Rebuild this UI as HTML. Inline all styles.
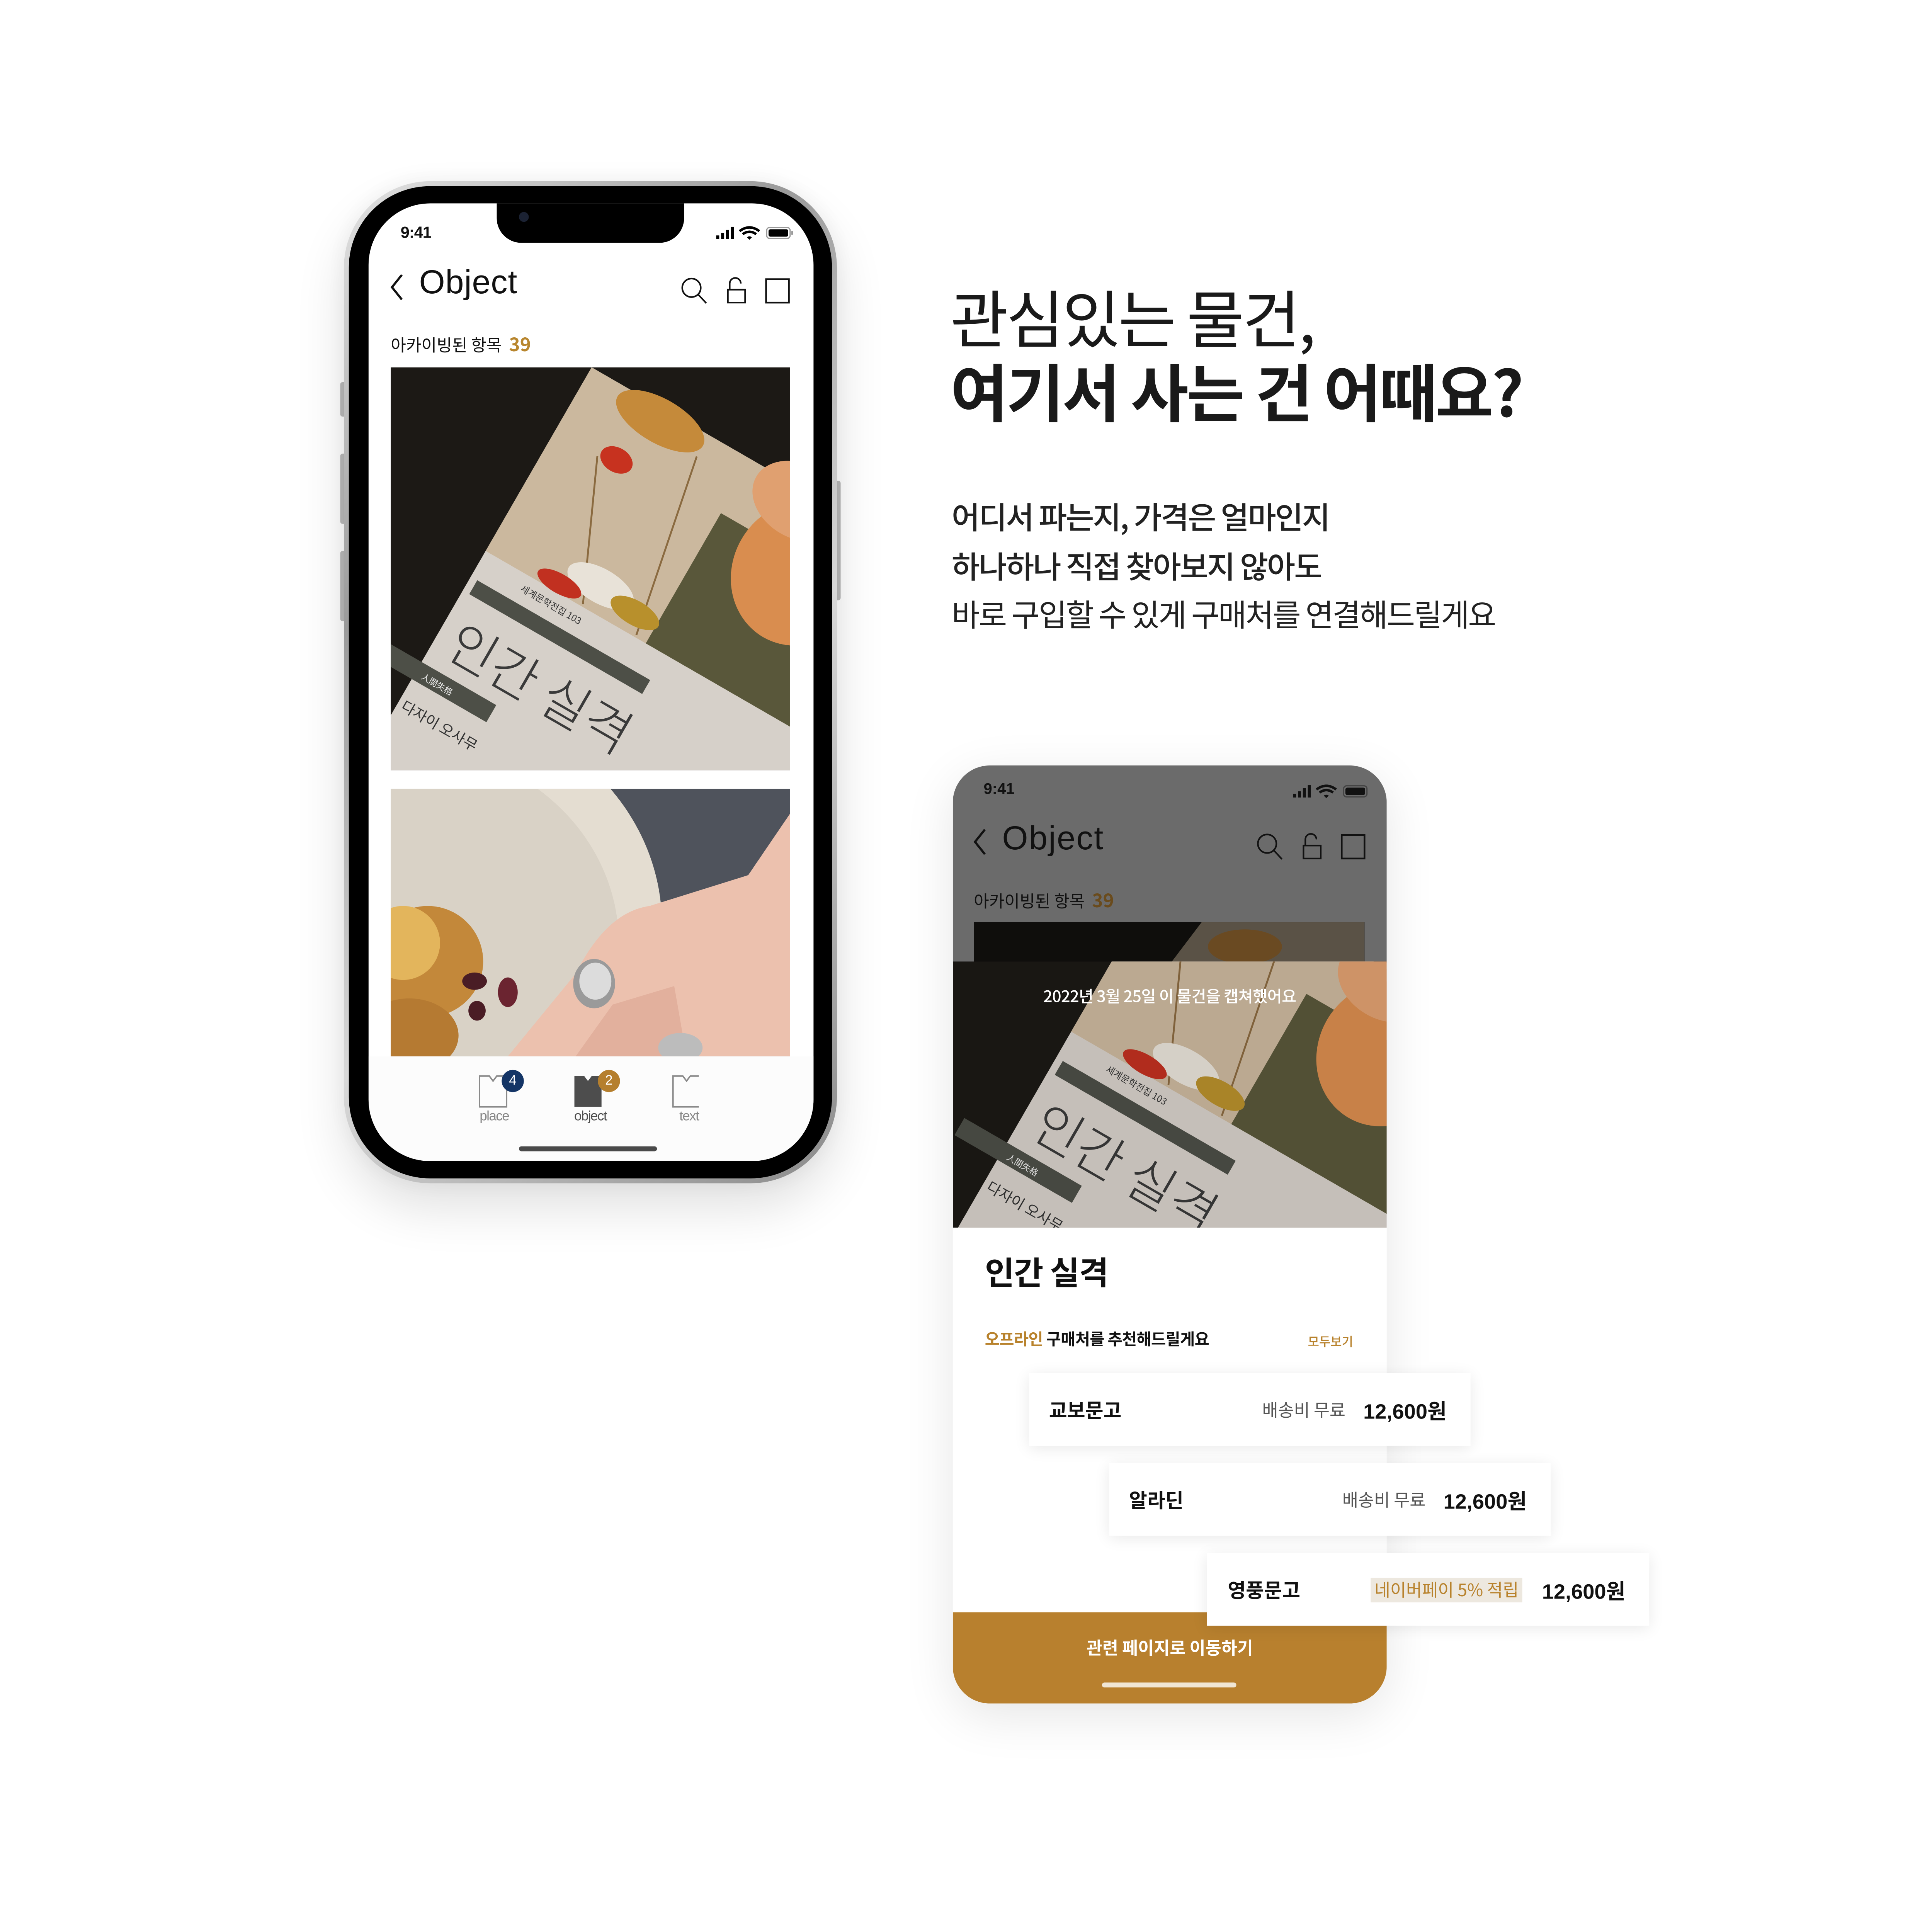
<!DOCTYPE html>
<html><head><meta charset="utf-8">
<style>
*{margin:0;padding:0;box-sizing:border-box}
html,body{width:5760px;height:5596px;overflow:hidden;background:#fff}
body{font-family:"Liberation Sans","Noto Sans CJK KR",sans-serif;color:#111}
#w{position:absolute;left:0;top:0;width:1805px;height:1754px;overflow:hidden;transform:scale(3.19);transform-origin:0 0}
.abs{position:absolute}
.kr{font-family:"Noto Sans CJK KR","Liberation Sans",sans-serif}
</style></head><body><div id="w">

<!-- PHONE 1 -->
<div class="abs" style="left:276px;top:310px;width:5px;height:28px;background:#bbb;border-radius:2px"></div>
<div class="abs" style="left:276px;top:368px;width:5px;height:57px;background:#bbb;border-radius:2px"></div>
<div class="abs" style="left:276px;top:447px;width:5px;height:57px;background:#bbb;border-radius:2px"></div>
<div class="abs" style="left:677px;top:390px;width:5px;height:97px;background:#bbb;border-radius:2px"></div>
<div class="abs" style="left:279px;top:147px;width:400px;height:813px;border-radius:70px;background:linear-gradient(135deg,#e4e4e4,#9a9a9a 30%,#d8d8d8 60%,#8a8a8a);box-shadow:0 20px 40px rgba(0,0,0,0.12),0 0 20px rgba(0,0,0,0.06)"></div>
<div class="abs" style="left:283px;top:151px;width:392px;height:805px;border-radius:66px;background:#000"></div>
<div class="abs" style="left:299px;top:165px;width:361px;height:777px;border-radius:50px;background:#fff;overflow:hidden">
  <div class="abs" style="left:104px;top:-2px;width:152px;height:34px;background:#000;border-radius:0 0 20px 20px"></div>
  <div class="abs" style="left:122px;top:7px;width:8px;height:8px;border-radius:50%;background:#1b2233"></div>
  <div class="abs" style="left:26px;top:16px;font-size:13px;font-weight:bold;letter-spacing:-0.3px">9:41</div>
  <svg class="abs" style="left:281px;top:18px" width="64" height="12" viewBox="0 0 64 12">
    <rect x="1" y="8" width="2.5" height="3" fill="#000"/><rect x="5" y="6" width="2.5" height="5" fill="#000"/><rect x="9" y="3.5" width="2.5" height="7.5" fill="#000"/><rect x="13" y="1" width="2.5" height="10" fill="#000"/>
    <path d="M20 4.5 Q28 -1.5 36 4.5 M22.5 7 Q28 3 33.5 7" stroke="#000" stroke-width="2" fill="none"/><path d="M26 9.5 L28 11.5 L30 9.5 Q28 8 26 9.5Z" fill="#000"/>
    <rect x="42" y="1.5" width="19" height="9" rx="2.5" fill="none" stroke="#999" stroke-width="1"/><rect x="43.5" y="3" width="16" height="6" rx="1.5" fill="#000"/><rect x="62" y="4.5" width="1.3" height="3" fill="#999"/>
  </svg>
  <svg class="abs" style="left:16px;top:56px" width="14" height="24"><path d="M11 2 L3 12 L11 22" stroke="#111" stroke-width="1.8" fill="none"/></svg>
  <div class="abs" style="left:41px;top:49px;font-size:27px;letter-spacing:0.3px;font-weight:300">Object</div>
  <svg class="abs" style="left:253px;top:59px" width="92" height="24" viewBox="0 0 92 24">
    <circle cx="9" cy="9.5" r="7.5" fill="none" stroke="#111" stroke-width="1.3"/><path d="M14.5 15 L21 22" stroke="#111" stroke-width="1.3"/>
    <path d="M40 11 V6 a4.5 4.5 0 0 1 9 0" fill="none" stroke="#111" stroke-width="1.3"/><rect x="38.5" y="11" width="14" height="10.5" fill="none" stroke="#111" stroke-width="1.3"/>
    <rect x="69.5" y="2.5" width="18.5" height="19" fill="none" stroke="#111" stroke-width="1.4"/>
  </svg>
  <div class="abs kr" style="left:18px;top:104px;font-size:13.5px;color:#111">아카이빙된 항목 <span style="color:#b8862e;font-weight:bold;font-size:15px;margin-left:3px">39</span></div>
  <div class="abs" style="left:18px;top:133px;width:324px;height:327px;overflow:hidden">
    <svg width="324" height="327" viewBox="0 0 324 327">
      <rect width="324" height="327" fill="#1c1915"/>
      <g transform="translate(163,0) rotate(30)">
        <rect x="0" y="0" width="460" height="560" fill="#d6d0c9"/>
        <rect x="0" y="0" width="460" height="172" fill="#cbb89e"/>
        <ellipse cx="70" cy="10" rx="40" ry="18" fill="#c58a3a"/>
        <ellipse cx="55" cy="55" rx="14" ry="10" fill="#c7321f"/>
        <path d="M40 60 L90 170 M110 20 L140 170" stroke="#8a6a40" stroke-width="1.5"/>
        <rect x="150" y="50" width="320" height="122" fill="#59573a"/>
        <ellipse cx="230" cy="60" rx="55" ry="60" fill="#d98d4f"/>
        <ellipse cx="200" cy="10" rx="40" ry="30" fill="#e0a070"/>
        <ellipse cx="95" cy="150" rx="30" ry="14" fill="#e8e2d8"/>
        <ellipse cx="65" cy="165" rx="20" ry="8" fill="#c13020"/>
        <ellipse cx="130" cy="155" rx="22" ry="10" fill="#b8902c"/>
        <text x="40" y="186" font-size="7.5" fill="#333" font-family="Noto Sans CJK KR">세계문학전집 103</text>
        <rect x="6" y="196" width="162" height="13" fill="#4d4f47"/>
        <text x="12" y="262" font-size="42" fill="#3a3a3a" font-family="Noto Sans CJK KR" font-weight="300">인간 실격</text>
        <rect x="-40" y="276" width="110" height="16" fill="#4d4f47"/>
        <text x="6" y="288" font-size="7" fill="#eee" font-family="Noto Sans CJK KR">人間失格</text>
        <text x="4" y="318" font-size="12" fill="#333" font-family="Noto Sans CJK KR">다자이 오사무</text>
        <text x="85" y="336" font-size="7" fill="#444" font-family="Noto Sans CJK KR">김춘미 옮김</text>
      </g>
    </svg>
  </div>
  <div class="abs" style="left:18px;top:475px;width:324px;height:217px;overflow:hidden">
    <svg width="324" height="217" viewBox="0 0 324 217">
      <rect width="324" height="217" fill="#4f535c"/>
      <ellipse cx="20" cy="110" rx="200" ry="180" fill="#e4ddd1"/>
      <ellipse cx="10" cy="125" rx="175" ry="160" fill="#d9d2c6"/>
      <path d="M95 217 L150 150 Q175 100 210 95 L290 70 L324 20 L324 217 Z" fill="#ecc1ae"/>
      <path d="M150 217 L180 175 L230 160 L240 217Z" fill="#e2b09d"/>
      <ellipse cx="165" cy="158" rx="17" ry="20" fill="#9a9a9a"/>
      <ellipse cx="166" cy="156" rx="13" ry="15" fill="#dcdcdc"/>
      <ellipse cx="235" cy="210" rx="18" ry="12" fill="#bcbcbc"/>
      <ellipse cx="30" cy="140" rx="45" ry="45" fill="#c3883a"/>
      <circle cx="10" cy="125" r="30" fill="#e3b55c"/>
      <ellipse cx="15" cy="200" rx="40" ry="30" fill="#b57a32"/>
      <ellipse cx="68" cy="156" rx="10" ry="7" fill="#4a1d25"/>
      <ellipse cx="95" cy="165" rx="8" ry="12" fill="#6b2430"/>
      <ellipse cx="70" cy="180" rx="7" ry="8" fill="#4a1d25"/>
    </svg>
  </div>
  <div class="abs" style="left:0;top:692px;width:361px;height:85px;background:#fcfcfc"></div>
  <svg class="abs" style="left:88px;top:704px" width="180" height="30" viewBox="0 0 180 30">
    <path d="M2 4 H10 L13 8 L16 4 H24 V29 H2 Z" fill="none" stroke="#8a8a8a" stroke-width="1.2"/>
    <path d="M79 4 H87 L90 8 L93 4 H101 V29 H79 Z" fill="#4d4d4d"/>
    <path d="M159 4 H167 L170 8 L173 4 H181 V29 H159 Z" fill="none" stroke="#8a8a8a" stroke-width="1.2"/>
  </svg>
  <div class="abs" style="left:108px;top:703px;width:18px;height:18px;border-radius:50%;background:#143566;color:#fff;font-size:11px;text-align:center;line-height:18px">4</div>
  <div class="abs" style="left:186px;top:703px;width:18px;height:18px;border-radius:50%;background:#b57f2e;color:#fff;font-size:11px;text-align:center;line-height:18px">2</div>
  <div class="abs" style="left:86px;top:735px;width:32px;text-align:center;font-size:11px;color:#888;letter-spacing:-0.5px">place</div>
  <div class="abs" style="left:160px;top:735px;width:40px;text-align:center;font-size:11px;color:#4d4d4d;letter-spacing:-0.5px">object</div>
  <div class="abs" style="left:245px;top:735px;width:30px;text-align:center;font-size:11px;color:#888;letter-spacing:-0.5px">text</div>
  <div class="abs" style="left:122px;top:765px;width:112px;height:4px;border-radius:2px;background:#4a4a4a"></div>
</div>

<!-- HEADLINE -->
<div class="abs kr" style="left:771px;top:226px;font-size:51px;line-height:60px;letter-spacing:-1.5px;color:#1a1a1a;white-space:nowrap">
  <div style="font-weight:400">관심있는 물건,</div>
  <div style="font-weight:700">여기서 사는 건 어때요?</div>
</div>
<div class="abs kr" style="left:772px;top:400px;font-size:25px;line-height:39.5px;letter-spacing:-1px;color:#222;white-space:nowrap">
  <div style="font-weight:500">어디서 파는지, 가격은 얼마인지</div>
  <div style="font-weight:500">하나하나 직접 찾아보지 않아도</div>
  <div style="font-weight:400">바로 구입할 수 있게 구매처를 연결해드릴게요</div>
</div>

<!-- PHONE 2 -->
<div class="abs" style="left:773px;top:621px;width:352px;height:761px;border-radius:30px;background:#fff;box-shadow:0 10px 40px rgba(0,0,0,0.1);overflow:hidden">
  <div class="abs" style="left:0;top:0;width:352px;height:160px;background:#6b6b6b"></div>
  <div class="abs" style="left:25px;top:12px;font-size:12.5px;font-weight:bold;color:#111">9:41</div>
  <svg class="abs" style="left:275px;top:15px" width="64" height="12" viewBox="0 0 64 12">
    <rect x="1" y="8" width="2.5" height="3" fill="#111"/><rect x="5" y="6" width="2.5" height="5" fill="#111"/><rect x="9" y="3.5" width="2.5" height="7.5" fill="#111"/><rect x="13" y="1" width="2.5" height="10" fill="#111"/>
    <path d="M20 4.5 Q28 -1.5 36 4.5 M22.5 7 Q28 3 33.5 7" stroke="#111" stroke-width="2" fill="none"/><path d="M26 9.5 L28 11.5 L30 9.5 Q28 8 26 9.5Z" fill="#111"/>
    <rect x="42" y="1.5" width="19" height="9" rx="2.5" fill="none" stroke="#444" stroke-width="1"/><rect x="43.5" y="3" width="16" height="6" rx="1.5" fill="#111"/>
  </svg>
  <svg class="abs" style="left:15px;top:50px" width="14" height="24"><path d="M11 2 L3 12 L11 22" stroke="#111" stroke-width="1.8" fill="none"/></svg>
  <div class="abs" style="left:40px;top:44px;font-size:27px;letter-spacing:0.8px;color:#111">Object</div>
  <svg class="abs" style="left:246px;top:54px" width="92" height="24" viewBox="0 0 92 24">
    <circle cx="9" cy="9.5" r="7.5" fill="none" stroke="#111" stroke-width="1.3"/><path d="M14.5 15 L21 22" stroke="#111" stroke-width="1.3"/>
    <path d="M40 11 V6 a4.5 4.5 0 0 1 9 0" fill="none" stroke="#111" stroke-width="1.3"/><rect x="38.5" y="11" width="14" height="10.5" fill="none" stroke="#111" stroke-width="1.3"/>
    <rect x="69.5" y="2.5" width="18.5" height="19" fill="none" stroke="#111" stroke-width="1.4"/>
  </svg>
  <div class="abs kr" style="left:17px;top:99px;font-size:13.5px;color:#111">아카이빙된 항목 <span style="color:#6a4b1c;font-weight:bold;font-size:15px;margin-left:3px">39</span></div>
  <div class="abs" style="left:17px;top:127px;width:317px;height:33px;background:#111;overflow:hidden">
    <svg width="317" height="33"><rect width="317" height="33" fill="#0f0e0c"/><polygon points="160,33 185,0 317,0 317,33" fill="#5a5246"/><ellipse cx="220" cy="20" rx="30" ry="14" fill="#6a4a22"/></svg>
  </div>
  <div class="abs" style="left:0;top:159px;width:352px;height:216px;overflow:hidden">
    <svg width="352" height="216" viewBox="0 0 352 216">
      <rect width="352" height="216" fill="#1c1915"/>
      <g transform="translate(182,-92) rotate(30)">
        <rect x="0" y="0" width="460" height="560" fill="#d6d0c9"/>
        <rect x="0" y="0" width="460" height="172" fill="#cbb89e"/>
        <ellipse cx="55" cy="55" rx="14" ry="10" fill="#c7321f"/>
        <path d="M40 60 L90 170 M110 20 L140 170" stroke="#8a6a40" stroke-width="1.5"/>
        <rect x="150" y="50" width="320" height="122" fill="#59573a"/>
        <ellipse cx="230" cy="60" rx="55" ry="60" fill="#d98d4f"/>
        <ellipse cx="200" cy="10" rx="40" ry="30" fill="#e0a070"/>
        <ellipse cx="95" cy="150" rx="30" ry="14" fill="#e8e2d8"/>
        <ellipse cx="65" cy="165" rx="20" ry="8" fill="#c13020"/>
        <ellipse cx="130" cy="155" rx="22" ry="10" fill="#b8902c"/>
        <text x="40" y="186" font-size="7.5" fill="#333" font-family="Noto Sans CJK KR">세계문학전집 103</text>
        <rect x="6" y="196" width="162" height="13" fill="#4d4f47"/>
        <text x="12" y="262" font-size="42" fill="#3a3a3a" font-family="Noto Sans CJK KR" font-weight="300">인간 실격</text>
        <rect x="-40" y="276" width="110" height="16" fill="#4d4f47"/>
        <text x="6" y="288" font-size="7" fill="#eee" font-family="Noto Sans CJK KR">人間失格</text>
        <text x="4" y="318" font-size="12" fill="#333" font-family="Noto Sans CJK KR">다자이 오사무</text>
      </g>
      <rect width="352" height="216" fill="rgba(0,0,0,0.08)"/>
    </svg>
    <div class="abs kr" style="left:0;top:18px;width:352px;text-align:center;font-size:13px;font-weight:500;color:#fff;letter-spacing:-0.2px">2022년 3월 25일 이 물건을 캡쳐했어요</div>
  </div>
  <div class="abs kr" style="left:26px;top:392px;font-size:26px;font-weight:700;color:#111;letter-spacing:-0.3px">인간 실격</div>
  <div class="abs kr" style="left:26px;top:455px;font-size:13px;font-weight:700;color:#111;letter-spacing:-0.2px"><span style="color:#b8822c">오프라인</span> 구매처를 추천해드릴게요</div>
  <div class="abs kr" style="left:288px;top:459px;font-size:10px;font-weight:500;color:#b8822c">모두보기</div>
  <div class="abs" style="left:0;top:687px;width:352px;height:74px;background:#b8802e"></div>
  <div class="abs kr" style="left:0;top:706px;width:352px;text-align:center;font-size:14px;font-weight:700;color:#fff">관련 페이지로 이동하기</div>
  <div class="abs" style="left:121px;top:744px;width:109px;height:4px;border-radius:2px;background:#f0e6d4"></div>
</div>

<div class="abs kr" style="left:835px;top:1114px;width:358px;height:59px;background:#fff;box-shadow:0 2px 12px rgba(0,0,0,0.09)">
  <div class="abs" style="left:16px;top:17px;font-size:16px;font-weight:700">교보문고</div>
  <div class="abs" style="left:189px;top:20px;font-size:14px;color:#555">배송비 무료</div>
  <div class="abs" style="left:271px;top:17px;font-size:17px;font-weight:700;font-family:'Liberation Sans','Noto Sans CJK KR',sans-serif">12,600<span class="kr">원</span></div>
</div>
<div class="abs kr" style="left:900px;top:1187px;width:358px;height:59px;background:#fff;box-shadow:0 2px 12px rgba(0,0,0,0.09)">
  <div class="abs" style="left:16px;top:17px;font-size:16px;font-weight:700">알라딘</div>
  <div class="abs" style="left:189px;top:20px;font-size:14px;color:#555">배송비 무료</div>
  <div class="abs" style="left:271px;top:17px;font-size:17px;font-weight:700;font-family:'Liberation Sans','Noto Sans CJK KR',sans-serif">12,600<span class="kr">원</span></div>
</div>
<div class="abs kr" style="left:979px;top:1260px;width:359px;height:59px;background:#fff;box-shadow:0 2px 12px rgba(0,0,0,0.09)">
  <div class="abs" style="left:17px;top:17px;font-size:16px;font-weight:700">영풍문고</div>
  <div class="abs" style="left:133px;top:20px;height:20px;padding:0 3px;font-size:14px;line-height:20px;color:#b8822c;background:#ede8df">네이버페이 5% 적립</div>
  <div class="abs" style="left:272px;top:17px;font-size:17px;font-weight:700;font-family:'Liberation Sans','Noto Sans CJK KR',sans-serif">12,600<span class="kr">원</span></div>
</div>

</div></body></html>
